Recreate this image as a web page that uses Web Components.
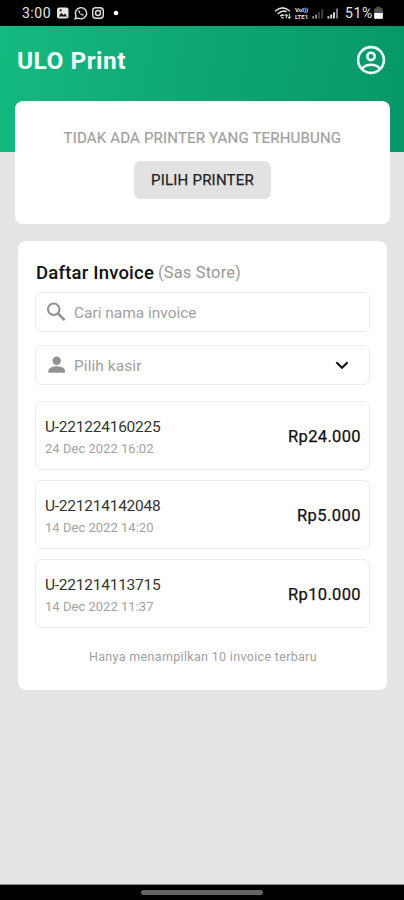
<!DOCTYPE html>
<html lang="id">
<head>
<meta charset="utf-8">
<title>ULO Print</title>
<style>
html,body{margin:0;height:100%;overflow:hidden}
body{font-family:Roboto,"Noto Sans",sans-serif;background:#e4e4e4;color:#111}
</style>
</head>
<body>
<ulo-app></ulo-app>
<script>
const define = (name, html, setup) => {
  const template = document.createElement('template');
  template.innerHTML = html;
  customElements.define(name, class extends HTMLElement {
    connectedCallback() {
      if (this.shadowRoot) return;
      this.attachShadow({mode: 'open'}).append(template.content.cloneNode(true));
      if (setup) setup(this, this.shadowRoot);
    }
  });
};

// One line of text, tracked so that it fills the width it is given.
define('text-run', `<style>:host{display:block;white-space:pre;flex:none}</style><slot></slot>`, el => {
  const size = el.getAttribute('size'), weight = el.getAttribute('weight') || 400;
  const text = el.textContent, width = +el.getAttribute('width');
  const ctx = document.createElement('canvas').getContext('2d');
  ctx.font = `${weight} ${size}px Roboto`;
  const tracking = (width - ctx.measureText(text).width) / text.length;
  Object.assign(el.style, {fontSize: size + 'px', fontWeight: weight, letterSpacing: tracking.toFixed(3) + 'px', width: width + 'px', lineHeight: '20px', height: '20px'});
});

define('status-bar', `<style>
:host{display:flex;align-items:center;height:25.5px;box-sizing:border-box;padding:0 20px 0 22px;background:#000;color:#e6e6e6}
svg{display:block;flex:none}
.volte{width:15px;margin:0 2px 0 3px;font:700 6px/7px Roboto,sans-serif;flex:none}
.volte span{display:block;white-space:pre}
</style>
<text-run size="14" width="29">3:00</text-run>
<svg width="68" height="14" viewBox="0 0 68 14" style="margin-left:5px" fill="none" stroke="#dedede" stroke-width="1.4">
<rect x="1" y="1.5" width="11.5" height="11" rx="2" fill="#e4e4e4" stroke="none"/><path d="M2.7 10.4l2.6-3.6 2.1 2.1 1.6-1.5 2.1 3z" fill="#111" stroke="none"/><circle cx="4.7" cy="4.3" r="1.1" fill="#111" stroke="none"/>
<path d="M19.2 12.8l.8-3A5.6 5.6 0 1 1 22 12z"/><path d="M22.7 4.1c-.9 1 .1 3.1 1.7 4.4 1.5 1.2 3 1.4 3.5.4l-1.6-1.2-1 .6c-.8-.5-1.1-1-1.4-1.7l.6-.8z" fill="#dedede" stroke="none"/>
<rect x="36.7" y="1.7" width="10.6" height="10.6" rx="3"/><circle cx="42" cy="7" r="2.5"/><circle cx="45" cy="4" r=".7" fill="#dedede" stroke="none"/>
<circle cx="60" cy="7" r="2.3" fill="#fff" stroke="none"/></svg>
<svg width="18" height="14" viewBox="0 0 18 14" style="margin-left:150px" fill="none" stroke="#dedede" stroke-width="1.5">
<path d="M1 5.2Q8.5-1.5 16 5.2M3.7 7.8Q9 3.4 12.6 6M6.3 10.2Q8 8.6 10 9.4M7.6 11.7h2"/><path d="M12.3 12.5V8.2m-1.6 1.7 1.6-1.9 1.6 1.9M15.4 7.5v5m-1.6-1.9 1.6 1.9 1.5-1.9" stroke-width="1"/></svg>
<div class="volte"><span>VoI))</span><span>LTE1</span></div>
<svg width="28" height="14" viewBox="0 0 28 14" fill="none" stroke="#dedede">
<path d="M1.2 12.5v-2.2M4.1 12.5V8.5" stroke="#999" stroke-width="1.8"/><path d="M7 12.5V6M10.2 12.5V3.2" stroke="#444" stroke-width="1.8"/>
<path d="M16.4 12.5v-2.2M19.2 12.5V8.5M22 12.5V6.2" stroke-width="1.9"/><path d="M25 12.5V2.5" stroke="#888" stroke-width="1.8"/></svg>
<text-run size="14" width="28" style="margin-left:5px">51%</text-run>
<svg width="9" height="13" viewBox="0 0 9 13" style="margin-left:1px"><path d="M2.5.8h4v1.5H8a.8.8 0 0 1 .8.8V12a.8.8 0 0 1-.8.8H1A.8.8 0 0 1 .2 12V3.1A.8.8 0 0 1 1 2.3h1.5z" fill="#555"/><path d="M.2 7h8.6v5a.8.8 0 0 1-.8.8H1a.8.8 0 0 1-.8-.8z" fill="#fff"/></svg>`);

define('app-header', `<style>
:host{display:flex;justify-content:space-between;box-sizing:border-box;height:126.5px;padding:19px 18px 0 17px;color:#f2fff9;background:linear-gradient(100deg,#14ba80 0%,#0fa775 45%,#069768 100%)}
text-run{margin-top:6px}
svg{display:block}
</style>
<text-run size="24.5" width="109" weight="700">ULO Print</text-run>
<svg width="30" height="30" viewBox="0 0 30 30" fill="none" stroke="#effff9" stroke-width="2.6"><circle cx="15" cy="15" r="12.9"/><circle cx="15" cy="11.4" r="3.7"/><path d="M6.2 23.3c4.6-4.8 13-4.8 17.6 0"/></svg>`);

define('ui-card', `<style>:host{display:block;box-sizing:border-box;background:#fff;border-radius:8px}</style><slot></slot>`);

define('printer-card', `<style>
:host{display:block;margin:-51px 14px 0 15px}
ui-card{display:flex;flex-direction:column;align-items:center;height:123px;padding-top:27px}
.msg{color:#a0a0a0;-webkit-text-stroke:.2px #a0a0a0}
button{display:flex;align-items:center;justify-content:center;width:137px;height:38px;margin:12.5px 0 0;padding:1px 0 0;border:0;border-radius:7px;background:#e2e2e2;color:#222;font-family:inherit;-webkit-text-stroke:.25px #222}
</style>
<ui-card><text-run class="msg" size="15" width="278">TIDAK ADA PRINTER YANG TERHUBUNG</text-run>
<button><text-run size="15" width="103">PILIH PRINTER</text-run></button></ui-card>`);

define('field-box', `<style>
:host{display:flex;align-items:center;box-sizing:border-box;height:40px;padding:2px 20px 0 10px;border:1.4px solid #ebebeb;border-radius:6px;color:#a0a0a0}
.tail{margin-left:auto}
</style><slot name="icon"></slot><slot></slot><span class="tail"><slot name="tail"></slot></span>`);

define('invoice-row', `<style>
:host{display:flex;align-items:center;justify-content:space-between;box-sizing:border-box;height:69px;padding:4px 8px 0 9px;border:1.4px solid #ebebeb;border-radius:6px}
.code{color:#333}.date{color:#a2a2a2;margin-top:2px}.price{color:#111;-webkit-text-stroke:.25px #111;margin-top:-2px}
</style><div class="info"></div>`,
(el, root) => {
  const addRun = (parent, name, size, width) => {
    const run = document.createElement('text-run');
    run.className = name;
    run.setAttribute('size', size);
    run.setAttribute('width', width);
    run.textContent = el.getAttribute(name);
    parent.append(run);
  };
  const info = root.querySelector('.info');
  addRun(info, 'code', 15.5, 115.5);
  addRun(info, 'date', 13, 108.5);
  addRun(root, 'price', 16.5, el.getAttribute('price-width'));
});

define('invoice-card', `<style>
:host{display:block;margin:17px 17px 0 18px}
ui-card{height:449px;padding:22px 17px 0}
.head{display:flex;gap:4px;padding-left:1px}
.head .store{color:#999}
.list{display:grid;gap:10px;margin-top:16px}
.note{color:#a0a0a0;margin:19px 0 0 54px}
svg{display:block}
</style>
<ui-card>
<div class="head"><text-run size="18.5" weight="500" width="118">Daftar Invoice</text-run><text-run class="store" size="16.5" width="83">(Sas Store)</text-run></div>
<field-box style="margin-top:9px"><svg slot="icon" width="28" height="24" viewBox="0 0 28 24" fill="none" stroke="#929292"><circle cx="7.7" cy="8.2" r="5.7" stroke-width="2"/><path d="M12 12.5l6.6 6.6" stroke-width="2.5"/></svg><text-run size="15.5" width="122.5">Cari nama invoice</text-run></field-box>
<field-box style="margin-top:13px"><svg slot="icon" width="28" height="24" viewBox="0 0 28 24" fill="#929292"><circle cx="10.7" cy="6.7" r="4.2"/><path d="M2.4 18.8v-2c0-3.1 5.3-4.5 8.3-4.5s8.3 1.4 8.3 4.5v2z"/></svg><text-run size="15.5" width="67.5">Pilih kasir</text-run><svg slot="tail" width="14" height="10" viewBox="0 0 14 10" fill="none" stroke="#111" stroke-width="2"><path d="M1.4 1.2L7 6.8l5.6-5.6"/></svg></field-box>
<div class="list">
<invoice-row code="U-221224160225" date="24 Dec 2022 16:02" price="Rp24.000" price-width="73"></invoice-row>
<invoice-row code="U-221214142048" date="14 Dec 2022 14:20" price="Rp5.000" price-width="64"></invoice-row>
<invoice-row code="U-221214113715" date="14 Dec 2022 11:37" price="Rp10.000" price-width="73"></invoice-row>
</div>
<text-run class="note" size="12.5" width="228">Hanya menampilkan 10 invoice terbaru</text-run>
</ui-card>`);

define('nav-handle', `<style>
:host{display:flex;justify-content:center;box-sizing:border-box;height:16px;padding-top:5px;border-top:1px solid #888;background:#000}
i{width:122px;height:5px;border-radius:3px;background:#666}
</style><i></i>`);

define('ulo-app', `<style>
:host{display:flex;flex-direction:column;width:404px;height:900px;background:#e4e4e4}
nav-handle{margin-top:auto}
</style><status-bar></status-bar><app-header></app-header><printer-card></printer-card><invoice-card></invoice-card><nav-handle></nav-handle>`);
</script>
</body>
</html>
